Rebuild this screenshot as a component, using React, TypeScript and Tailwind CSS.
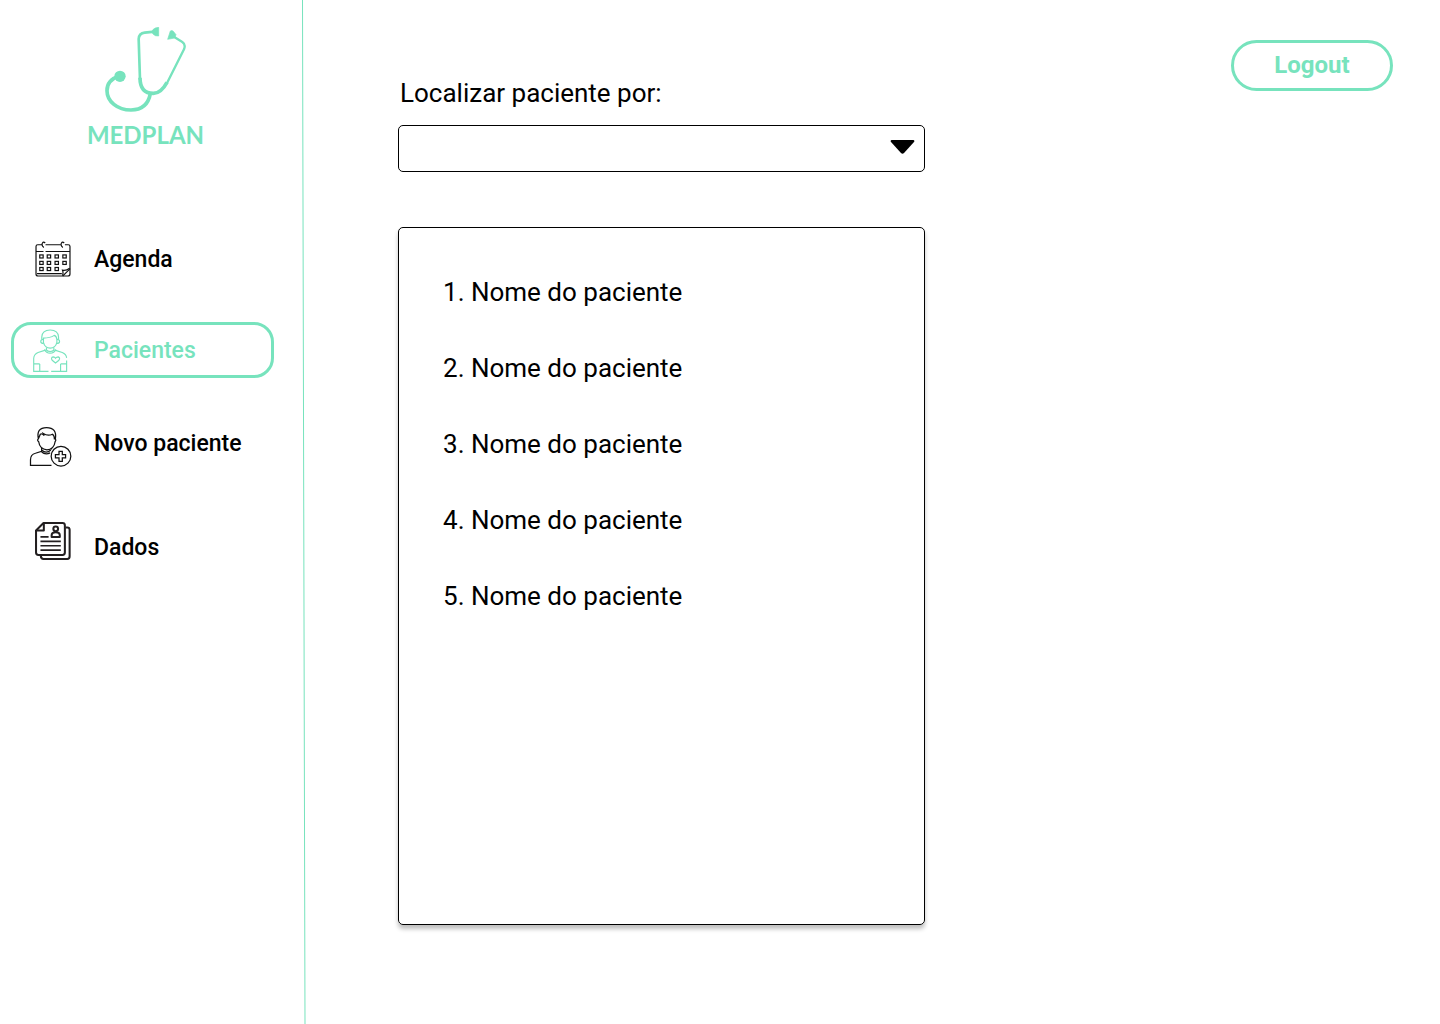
import type { ReactNode } from "react";

function Stethoscope() {
  return (
    <svg viewBox="75 22 246 258" width="82" height="86" fill="none" stroke="#77e3bd" aria-hidden="true">
      <path d="M224 36 L194 39 Q177 41 176 58 L180 180" strokeWidth="8" />
      <path d="M278 49 L307 67 Q318 74 312 89 L260 192" strokeWidth="7" />
      <path d="M180 174 Q180 221 220 221 Q243 221 261 188" strokeWidth="11" />
      <path d="M211 222 C205 254 184 271 153 271 C112 271 81 245 81 213 C81 191 95 177 116 170" strokeWidth="11" />
      <circle cx="120" cy="170" r="17" fill="#77e3bd" stroke="none" />
      <path d="M236 23 V49 L226 48 Q216 43 216 36 Q217 29 226 25 Z M271 34 Q276 31 280 35 L288 45 L284 55 L263 59 Z" fill="#77e3bd" stroke="#77e3bd" strokeWidth="2" />
    </svg>
  );
}

function CalendarIcon() {
  const cells = [
    [43, 60], [65, 60], [88, 60], [111, 60],
    [43, 79], [65, 79], [88, 79], [111, 79],
    [43, 97], [65, 97], [88, 97],
  ];
  return (
    <svg viewBox="29 19 106 106" width="36" height="36" fill="none" stroke="#111" strokeWidth="3.5" aria-hidden="true">
      <path d="M50 30 H37 Q32 30 32 35 V116 Q32 122 38 122 H111 L132 101 V35 Q132 30 127 30 H117 M60 30 H105 M32 50 H54 M60 50 H132 M35 115 H108" />
      <path d="M110 121 Q113 112 110 105 Q121 107 131 99 M55 38 Q47 32 51 25 Q54 20 59 25 M111 38 Q103 32 107 25 Q110 20 115 25 M132 101 V116 Q132 122 126 122 H111" />
      {cells.map(([x, y]) => (
        <rect key={`${x}-${y}`} x={x} y={y} width="10" height="9" />
      ))}
    </svg>
  );
}

function PatientIcon() {
  return (
    <svg viewBox="24 23 104 128" width="35" height="43" fill="none" stroke="currentColor" strokeWidth="3.4" aria-hidden="true">
      <path d="M50 54 V47 Q51 26 75 26 Q99 26 100 47 V54 M55 54 V50 Q75 50 87 42 Q94 44 95 54 V63 Q91 80 75 80 Q59 80 55 63 Z" />
      <path d="M55 54 Q47 54 47 60 Q47 66 56 66 M95 54 Q103 54 103 60 Q103 66 94 66 M64 78 V84 M86 78 V84 M58 84 Q63 95 75 95 Q87 95 92 84 M62 84 Q68 90 75 90 Q82 90 88 84" />
      <path d="M61 86 L39 93 Q27 98 26 110 V149 H70 M78 149 H124 V117 M89 86 L111 93 Q123 98 124 109 M44 127 V149 M26 127 H44 M106 127 V149 M106 127 H124" />
      <path d="M91 124 L81 116 Q76 108 84 106 Q89 106 91 110 Q94 106 99 106 Q106 109 101 116 Z" />
    </svg>
  );
}

function NewPatientIcon() {
  return (
    <svg viewBox="27 22 130 122" width="43" height="40" fill="none" stroke="#111" strokeWidth="3.8" aria-hidden="true">
      <path d="M95 139 H31 V122 Q31 106 46 102 L65 96 V86 M95 86 V91 M65 92 Q79 105 93 92 M65 98 Q76 108 91 101" />
      <path d="M55 58 Q48 24 80 24 Q112 24 107 58 Q110 62 106 67 Q103 90 81 92 Q59 89 56 67 Q50 62 55 58 L61 44 Q65 40 73 48 L70 42 Q84 51 98 44 Q105 49 104 60" />
      <circle cx="124" cy="111" r="30" />
      <path d="M118 96 H128 V106 H138 V116 H128 V127 H118 V116 H107 V106 H118 Z" />
    </svg>
  );
}

function RecordsIcon() {
  return (
    <svg viewBox="34 26 106 112" width="36" height="38" fill="none" stroke="#231f20" strokeWidth="6" strokeLinejoin="round" aria-hidden="true">
      <path d="M59 29 H115 Q122 29 122 36 V116 Q122 123 115 123 H44 Q37 123 37 116 V51 Z" />
      <path d="M60 31 V51 H39 M124 42 H129 Q136 42 136 49 V127 Q136 135 129 135 H59 Q51 135 51 125" />
      <path d="M50 70 H74 M50 83 H110 M50 96 H110 M50 109 H110" strokeWidth="5" />
      <circle cx="95" cy="46" r="7" strokeWidth="6" />
      <path d="M83 70 V65 Q83 56 95 56 Q107 56 107 65 V70 Z" strokeWidth="6" />
    </svg>
  );
}

type NavItemProps = {
  icon: ReactNode;
  label: string;
  active?: boolean;
  className?: string;
  iconClass?: string;
};

function NavItem({ icon, label, active = false, className = "", iconClass = "" }: NavItemProps) {
  const tone = active ? "border-[#77e3bd] text-[#77e3bd]" : "border-transparent text-black";
  return (
    <li className={className}>
      <a
        href="#"
        aria-current={active ? "page" : undefined}
        className={`flex h-14 items-center gap-[22px] rounded-[20px] border-3 pl-[14px] text-[23px] font-medium ${tone}`}
      >
        <span className={`flex w-11 justify-center ${iconClass}`}>{icon}</span>
        <span className="pt-0.5">{label}</span>
      </a>
    </li>
  );
}

export default function App() {
  const patients = ["Nome do paciente", "Nome do paciente", "Nome do paciente", "Nome do paciente", "Nome do paciente"];
  return (
    <div className="flex min-h-screen bg-white font-[Roboto,sans-serif] text-black">
      <aside className="relative w-[306px] shrink-0 pr-8 pl-[11px]">
        <svg className="absolute inset-y-0 right-0 h-full w-1" viewBox="0 0 4 1024" preserveAspectRatio="none" aria-hidden="true">
          <path d="M0.5 0 L3 1024" stroke="#77e3bd" strokeWidth="1" />
        </svg>
        <div className="flex flex-col items-center pt-[27px] pl-1.5">
          <Stethoscope />
          <p className="mt-2 font-[Lato,sans-serif] text-2xl leading-7 font-bold text-[#77e3bd]">MEDPLAN</p>
        </div>
        <nav aria-label="Principal" className="mt-[82px]">
          <ul>
            <NavItem icon={<CalendarIcon />} label="Agenda" iconClass="pl-1.5" />
            <NavItem icon={<PatientIcon />} label="Pacientes" active className="mt-[35px]" />
            <NavItem icon={<NewPatientIcon />} label="Novo paciente" className="mt-[37px]" iconClass="mt-2" />
            <NavItem icon={<RecordsIcon />} label="Dados" className="mt-12" iconClass="mb-3 pl-1.5" />
          </ul>
        </nav>
      </aside>

      <main className="flex flex-1 justify-between gap-8 pt-10 pr-[47px] pb-[99px] pl-[92px]">
        <div className="flex w-full max-w-[527px] flex-col pt-[37px]">
          <label htmlFor="filter" className="pl-0.5 text-[26px] leading-8">
            Localizar paciente por:
          </label>
          <div className="relative mt-4">
            <select id="filter" className="block h-[47px] w-full appearance-none rounded-[5px] border border-black bg-white px-4 text-[26px]">
              <option value=""></option>
            </select>
            <svg className="pointer-events-none absolute top-[15px] right-[10px]" width="25" height="14" viewBox="0 0 25 14" aria-hidden="true">
              <path d="M1.5 0 H23.5 Q25 0.5 24 2 L14 13 Q12.500 14.500 11 13 L1 2 Q0 0.500 1.500 0 Z" fill="#000" />
            </svg>
          </div>
          <ol className="mt-[55px] flex flex-1 flex-col gap-11 rounded-[5px] border border-black px-11 pt-12 pb-12 text-[26px] leading-8 shadow-[0_4px_4px_rgba(0,0,0,0.25)]">
            {patients.map((name, index) => (
              <li key={index}>
                {index + 1}. {name}
              </li>
            ))}
          </ol>
        </div>
        <button type="button" className="h-[51px] w-[162px] shrink-0 rounded-full border-3 border-[#77e3bd] pb-0.5 text-2xl font-bold text-[#77e3bd]">
          Logout
        </button>
      </main>
    </div>
  );
}
